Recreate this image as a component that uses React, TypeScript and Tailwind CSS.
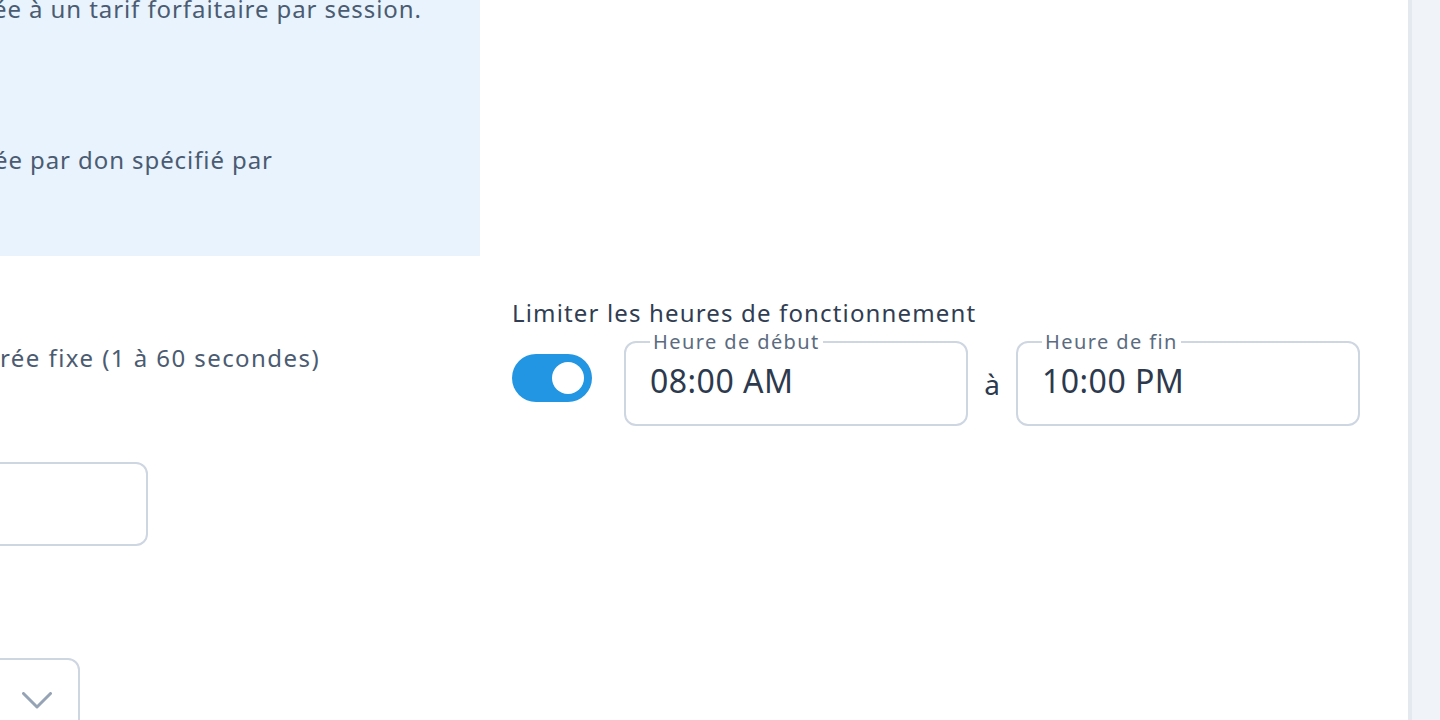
import React from "react";

function TimeField({ label, value }: { label: string; value: string }) {
  return (
    <fieldset className="w-[344px] shrink-0 rounded-xl border-2 border-[#cdd6e1] px-6 pt-[9px] pb-[25px]">
      <legend className="px-[3px] text-[20px] leading-6 tracking-[0.07em] text-[#5b6b80]">{label}</legend>
      <div className="text-[32px] leading-9 tracking-[0.015em] text-[#2d3a4e]">{value}</div>
    </fieldset>
  );
}

export default function App() {
  return (
    <div
      className="flex h-[720px] w-[1440px] overflow-hidden bg-white"
      style={{ fontFamily: '"Noto Sans", "Open Sans", sans-serif' }}
    >
      <main className="flex flex-1 gap-8 overflow-hidden">
        {/* left column */}
        <div className="flex w-[480px] shrink-0 flex-col">
          <section className="h-[256px] shrink-0 overflow-hidden bg-[#e8f3fd] text-[24px] leading-8 tracking-[0.038em] text-[#4b5b71]">
            <p className="-ml-[7px] -mt-[7px] whitespace-nowrap">ée à un tarif forfaitaire par session.</p>
            <p className="-ml-[6px] mt-[119px] whitespace-nowrap">ée par don spécifié par</p>
          </section>
          <p className="mt-[86px] shrink-0 whitespace-nowrap text-[24px] leading-8 tracking-[0.06em] text-[#4b5b71]">
            rée fixe (1 à 60 secondes)
          </p>
          <div className="-ml-[100px] mt-[88px] h-[84px] w-[248px] shrink-0 rounded-xl border-2 border-[#cdd6e1]" />
          <div className="-ml-[100px] mt-[112px] flex h-[84px] w-[180px] shrink-0 items-center justify-end rounded-xl border-2 border-[#cdd6e1] pr-[26px]">
            <svg width="30" height="17" viewBox="0 0 30 17" fill="none">
              <polyline points="1.5,1.5 15,15 28.5,1.5" stroke="#95a3b5" strokeWidth="3" strokeLinecap="round" strokeLinejoin="round" />
            </svg>
          </div>
        </div>

        {/* right column */}
        <div className="flex w-[848px] shrink-0 flex-col pt-[297px]">
          <p className="whitespace-nowrap text-[24px] leading-8 tracking-[0.048em] text-[#303d52]">
            Limiter les heures de fonctionnement
          </p>
          <div className="mt-px flex items-center gap-8">
            <button
              type="button"
              className="flex h-12 w-20 shrink-0 items-center justify-end rounded-full bg-[#2295e3] pr-2"
            >
              <span className="h-8 w-8 rounded-full bg-white" />
            </button>
            <div className="flex items-center gap-4">
              <TimeField label="Heure de début" value="08:00 AM" />
              <span className="mt-3 w-4 text-center text-[28px] leading-9 text-[#2d3a4e]">à</span>
              <TimeField label="Heure de fin" value="10:00 PM" />
            </div>
          </div>
        </div>
      </main>
      <div className="w-1 shrink-0 bg-[#e4e9f0]" />
      <div className="w-7 shrink-0 bg-[#f0f4f9]" />
    </div>
  );
}
